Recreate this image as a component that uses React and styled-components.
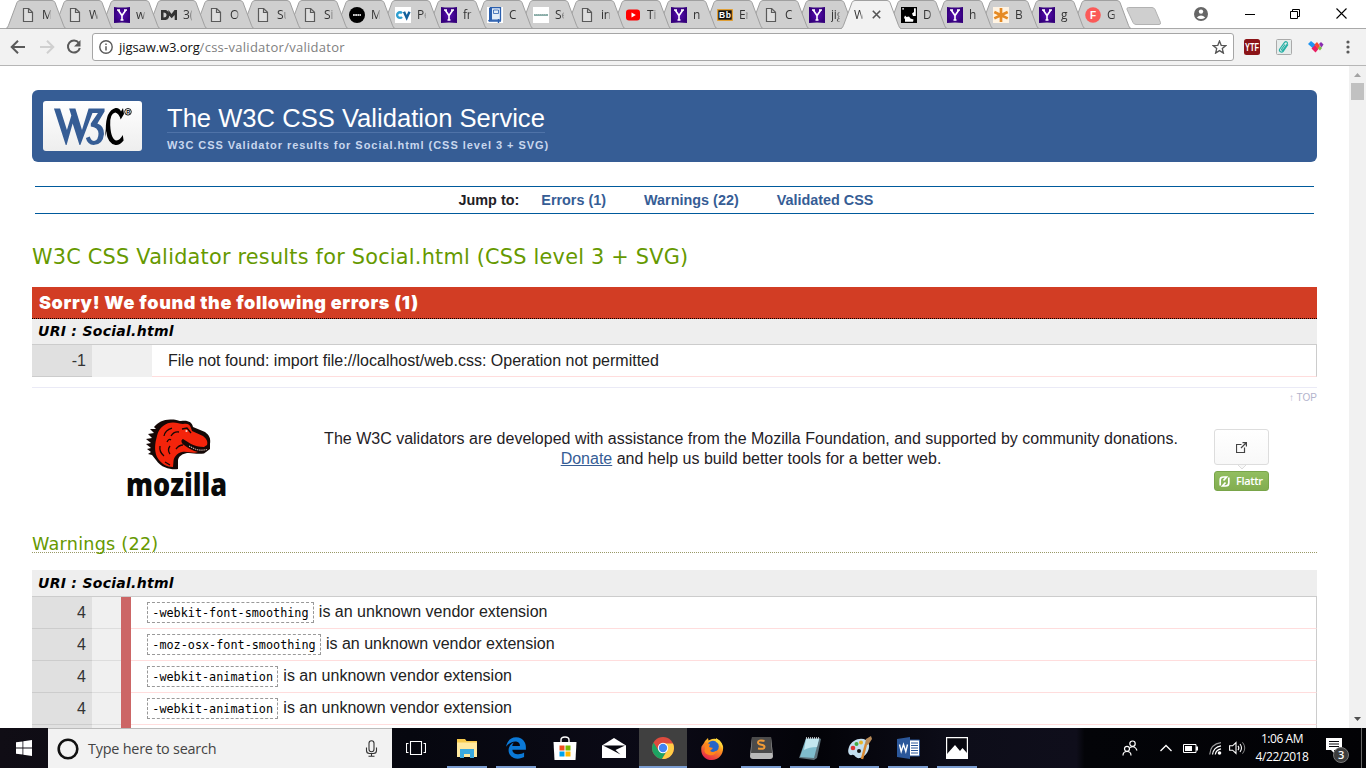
import React from 'react';
import styled, { createGlobalStyle } from 'styled-components';
import { FaEdgeLegacy } from 'react-icons/fa';

const Global = createGlobalStyle`
  * { box-sizing: border-box; }
  body { margin: 0; background: #fff; overflow: hidden; }
  svg { display: block; flex: none; }
`;

const ui = `"Open Sans", "Noto Sans", sans-serif`;
const arial = `"Liberation Sans", Arial, sans-serif`;
const verdana = `"DejaVu Sans", Verdana, sans-serif`;

const Screen = styled.div`
  width: 1366px;
  height: 768px;
  display: flex;
  flex-direction: column;
  overflow: hidden;
  font-family: ${arial};
`;

/* ---------- browser frame ---------- */
const TabStrip = styled.div`
  height: 29px;
  display: flex;
  padding-left: 6px;
  flex: none;
  border-bottom: 1px solid #a9a9a9;
`;
const TabItem = styled.div`
  position: relative;
  width: 59px;
  height: 29px;
  flex: none;
  margin-right: ${p => p.$overlap}px;
  z-index: ${p => p.$z};
  display: flex;
  align-items: center;
  padding: 0 0 0 ${p => (p.$active ? 13 : 14)}px;
`;
const TabShape = styled.svg`
  position: absolute;
  left: 0;
  top: 0;
`;
const Favicon = styled.div`
  position: relative;
  width: 16px;
  height: 16px;
  margin-right: 6px;
  margin-top: 1px;
`;
const TabLabel = styled.span`
  position: relative;
  width: 9px;
  overflow: hidden;
  white-space: nowrap;
  font: 12px/18px ${ui};
  letter-spacing: -0.2px;
  color: #333;
  mask-image: linear-gradient(90deg, #000 65%, rgba(0, 0, 0, 0.2));
`;
const TabClose = styled.svg`
  position: relative;
  margin-left: 9px;
`;
const NewTab = styled.svg`
  margin: 7px 0 0 9px;
`;
const WindowControls = styled.div`
  margin-left: auto;
  display: flex;
  align-items: center;
  height: 27px;
  padding-right: 19px;
`;
const Control = styled.svg`
  margin-left: ${p => p.$gap}px;
`;

const Toolbar = styled.div`
  height: 37px;
  flex: none;
  background: #f2f2f2;
  border-bottom: 1px solid #b6b6b6;
  display: flex;
  align-items: center;
  padding: 0 10px 0 9px;
`;
const NavIcon = styled.svg`
  margin-right: ${p => p.$gap}px;
`;
const Omnibox = styled.div`
  width: 1142px;
  height: 28px;
  background: #fff;
  border: 1px solid #a6a6a6;
  border-radius: 3px;
  display: flex;
  align-items: center;
  padding: 0 6px;
`;
const Address = styled.div`
  flex: 1;
  margin-left: 6px;
  font: 13px/20px ${ui};
  letter-spacing: 0.27px;
  color: #808080;
  b { font-weight: 400; color: #111; letter-spacing: -0.08px; }
`;
const Extensions = styled.div`
  margin-left: 10px;
  display: flex;
  align-items: center;
  gap: 16px;
`;

/* ---------- page ---------- */
const Viewport = styled.div`
  height: 662px;
  flex: none;
  display: flex;
  overflow: hidden;
`;
const Page = styled.main`
  width: 1349px;
  padding: 24px 32px 0;
  overflow: hidden;
`;
const Scrollbar = styled.div`
  width: 17px;
  background: #f1f1f1;
  display: flex;
  flex-direction: column;
  align-items: center;
  justify-content: space-between;
`;
const ScrollTop = styled.div`
  display: flex;
  flex-direction: column;
  align-items: center;
`;
const Thumb = styled.div`
  width: 13px;
  height: 17px;
  background: #c1c1c1;
`;
const Banner = styled.header`
  height: 72px;
  background: #365d95;
  border-radius: 6px;
  display: flex;
  padding: 11px;
`;
const LogoBox = styled.div`
  width: 99px;
  height: 50px;
  border-radius: 3px;
  background: linear-gradient(#fff, #eee);
  margin-right: 25px;
`;
const BannerText = styled.div`
  display: flex;
  flex-direction: column;
  align-items: flex-start;
`;
const BannerTitle = styled.h1`
  margin: 0;
  height: 32px;
  font: 400 25.6px/34px ${arial};
  color: #fff;
  border-bottom: 1px solid #4f73a8;
`;
const BannerSub = styled.p`
  margin: 5px 0 0;
  font: 700 11px/14px ${arial};
  letter-spacing: 0.96px;
  color: #c8d7ee;
  white-space: nowrap;
`;
const JumpBar = styled.nav`
  margin: 24px 3px 0;
  height: 28px;
  border-top: 1px solid #005a9c;
  border-bottom: 1px solid #005a9c;
  display: flex;
  align-items: center;
  justify-content: center;
  font: 700 14.4px/20px ${arial};
  color: #1f2126;
  padding-right: 17px;
`;
const JumpLink = styled.a`
  color: #365d95;
  margin-left: ${p => p.$gap}px;
`;
const ResultTitle = styled.h2`
  margin: 30px 0 0;
  font: 400 20.8px/26px ${verdana};
  letter-spacing: 0.23px;
  color: #690;
  white-space: nowrap;
`;
const ErrorTitle = styled.h3`
  margin: 17px 0 0;
  height: 32px;
  padding-left: 7px;
  background: #d23d24;
  border-bottom: 1px dotted #000;
  color: #fff;
  font: 900 18px/32px Inter, ${arial};
  letter-spacing: 0.62px;
`;
const UriBar = styled.h4`
  margin: 0;
  height: ${p => p.$h}px;
  padding-left: 6px;
  background: #eee;
  border-bottom: 1px solid #ccc;
  font: italic 700 14px/25px ${verdana};
  line-height: ${p => (p.$h === 27 ? 27 : 25)}px;
  letter-spacing: 0.28px;
  color: #000;
`;
const Row = styled.div`
  display: flex;
  height: 32px;
  font: 16px/30px ${arial};
  color: #222;
`;
const LineNo = styled.div`
  width: 60px;
  background: #e0e0e0;
  border-bottom: 1px solid #ccc;
  text-align: right;
  padding-right: 6px;
  font: 16px/32px ${arial};
  color: #333;
`;
const Context = styled.div`
  width: ${p => p.$w}px;
  background: #f0f0f0;
  border-bottom: 1px solid ${p => (p.$line ? '#ddd' : '#f0f0f0')};
`;
const Level = styled.div`
  width: 10px;
  background: #cc6666;
`;
const Message = styled.div`
  flex: 1;
  padding-left: 16px;
  padding-top: ${p => p.$drop || 0}px;
  border-bottom: 1px solid #fdd;
  border-right: 1px solid #ccc;
  color: #222;
`;
const Code = styled.code`
  display: inline-block;
  height: 21px;
  border: 1px dashed #999;
  padding: 0 4.3px;
  margin-right: 5px;
  font: 11.8px/21px "DejaVu Sans Mono", monospace;
  color: #000;
`;
const BackTop = styled.div`
  margin-top: 10px;
  border-top: 1px solid #eaeaf6;
  text-align: right;
  font: 10px/20px ${arial};
  color: #b3b3cc;
`;
const Support = styled.section`
  height: 124px;
  display: flex;
`;
const MozillaMark = styled.div`
  width: 250px;
  padding: 10px 0 0 90px;
`;
const SupportText = styled.p`
  margin: 21px 0 0 0;
  width: 938px;
  text-align: center;
  font: 16px/20px ${arial};
  color: #1f2126;
  a { color: #365d95; text-decoration: underline; }
`;
const Flattr = styled.div`
  width: 55px;
  margin: 21px 0 0 -6px;
`;
const FlattrCount = styled.div`
  height: 36px;
  border: 1px solid #ddd;
  border-radius: 3px;
  background: linear-gradient(#fff, #f8f8f8);
  display: flex;
  align-items: center;
  justify-content: center;
`;
const FlattrButton = styled.div`
  height: 20px;
  border: 1px solid #79a549;
  border-radius: 3px;
  background: linear-gradient(#92be60, #82ad50);
  display: flex;
  align-items: center;
  gap: 6px;
  padding-left: 4px;
  color: #fff;
  font: 600 11px/18px ${ui};
  letter-spacing: -0.35px;
`;
const WarningTitle = styled.h3`
  margin: 0 0 17px;
  height: 21px;
  border-bottom: 1px dotted #996;
  font: 400 17.6px/24px ${verdana};
  letter-spacing: 0.25px;
  color: #690;
`;

/* ---------- taskbar ---------- */
const Taskbar = styled.footer`
  height: 40px;
  flex: none;
  display: flex;
  background: linear-gradient(90deg, #100d15 0, #06070f 30%, #0b0a16 48%, #030308 60%, #0d0d19 70%, #0f0e1b 78.8%, #030408 79.4%, #020205 100%);
  color: #fff;
`;
const Start = styled.div`
  width: 48px;
  display: flex;
  align-items: center;
  justify-content: center;
`;
const Search = styled.div`
  width: 344px;
  background: #f2f2f2;
  border-top: 1px solid #bbb;
  display: flex;
  align-items: center;
  padding: 0 14px 0 8px;
  font: 14.4px/20px ${ui};
  letter-spacing: -0.22px;
  color: #444;
  span { flex: 1; margin-left: 8px; }
`;
const TaskView = styled.div`
  width: 51px;
  display: flex;
  align-items: center;
  justify-content: center;
  padding-right: 3px;
`;
const Apps = styled.div`
  display: flex;
  gap: 1px;
`;
const TaskButton = styled.div`
  width: 48px;
  height: 40px;
  display: flex;
  flex-direction: column;
  align-items: center;
  background: ${p => (p.$active ? '#404040' : 'transparent')};
`;
const AppIcon = styled.div`
  height: 38px;
  display: flex;
  align-items: center;
  padding-top: 2px;
`;
const Underline = styled.div`
  width: ${p => (p.$active ? 48 : 40)}px;
  height: 2px;
  background: ${p => (p.$show ? '#7a9cd0' : 'transparent')};
`;
const Tray = styled.div`
  margin-left: auto;
  display: flex;
  align-items: center;
`;
const TrayIcon = styled.svg`
  margin-right: ${p => p.$gap}px;
`;
const Clock = styled.div`
  width: 60px;
  margin-right: 13px;
  text-align: center;
  font: 12px/18px ${ui};
  letter-spacing: -0.45px;
  white-space: nowrap;
`;
const ShowDesktop = styled.div`
  width: 5px;
  height: 40px;
  border-left: 1px solid #666;
`;

const Fav = ({ kind }) => {
  const s = { width: 16, height: 16, viewBox: '0 0 16 16' };
  switch (kind) {
    case 'y':
      return <svg {...s}><defs><radialGradient id="yg"><stop offset="0" stopColor="#5a10b4" /><stop offset="1" stopColor="#35007c" /></radialGradient></defs><path d="M0 0q8 1.2 16 0v16q-8-1.2-16 0z" fill="url(#yg)" /><path d="M3 3h3M10 3h3M4.3 3.3 8 8.5 11.7 3.3M8 8.5V13M6.5 13h3" stroke="#fff" strokeWidth="1.6" fill="none" /></svg>;
    case 'dm':
      return <svg {...s}><path d="M0 3h5q3 1 3 5t-3 5H0zM2.5 5.5v5q3 0 3-2.5t-3-2.5z" fill="#333" fillRule="evenodd" /><path d="M7.5 3l3 4 3-4H16v10h-2.3V8l-3 3.3-2.4-2.5L6.5 13z" fill="#333" /></svg>;
    case 'black':
      return <svg {...s}><circle cx="8" cy="8" r="8" fill="#000" /><path d="M4 8h8" stroke="#ccc" strokeWidth="1.8" strokeDasharray="1.8 .4" /></svg>;
    case 'cv':
      return <svg {...s}><rect width="16" height="16" fill="#fff" /><path d="M7 6.2A2.8 2.8 0 1 0 7 10" stroke="#2f9fd0" strokeWidth="2.4" fill="none" /><path d="M9 4.800l2.700 6L14.500 4.800" stroke="#14619c" strokeWidth="2.4" fill="none" /></svg>;
    case 'book':
      return <svg {...s}><rect width="16" height="16" fill="#fff" /><path d="M3 .7h10.500v12.500H3q-1.300 0-1.300 1" fill="#e4edf8" stroke="#2b5fae" strokeWidth="1.300" /><path d="M2 .7h3v12.500H2z" fill="#2b5fae" /><path d="M6.500 3h5v3.500h-5z" fill="none" stroke="#2b5fae" strokeWidth=".8" /><path d="M2 14h12M11.500 12v4" stroke="#2b5fae" strokeWidth="1.4" /></svg>;
    case 'line':
      return <svg {...s}><rect width="16" height="16" fill="#fff" /><path d="M1 8h14" stroke="#6d9a94" strokeWidth="1.600" /><path d="M2 7.500h12" stroke="#a9bcb9" strokeWidth="1" strokeDasharray="1 1" /></svg>;
    case 'yt':
      return <svg {...s}><rect x="1" y="2.5" width="14" height="11" rx="3" fill="#f00" /><path d="M6.5 5.5v5L10.8 8z" fill="#fff" /></svg>;
    case 'bb':
      return <svg {...s}><rect x=".7" y="2.7" width="14.6" height="10.6" fill="#111" stroke="#e8a02c" strokeWidth="1.2" /><text x="2" y="11" fontFamily={arial} fontWeight="700" fontSize="8.5" fill="#fff" textLength="12">Bb</text></svg>;
    case 'bw':
      return <svg {...s}><rect width="16" height="16" fill="#fff" /><path d="M1 2.500h2V1h10v4l-2 1.500 1 2.500h3v6h-3l.5-2.500-3-1L8 9.500 5.500 10 4 8.500 3 11l1 1v3H1z" fill="#000" /><path d="M0 0h16v16H0z" fill="none" stroke="#000" strokeWidth="2.400" /></svg>;
    case 'ast':
      return <svg {...s}><rect width="16" height="16" fill="#fff3e2" /><path d="M8 1v14M1.3 5l13.4 6.4M14.7 5 1.3 11.4" stroke="#e58a24" strokeWidth="2.7" /></svg>;
    case 'f':
      return <svg {...s}><circle cx="8" cy="8" r="7.8" fill="#fb5a58" /><text x="5" y="11.6" fontFamily={arial} fontWeight="700" fontSize="10" fill="#fff">F</text></svg>;
    default:
      return <svg {...s}><path d="M3.5 1.5h5.2l3.8 3.8v9.2h-9zM8.5 1.5v4h4" fill="#dedede" stroke="#5a5a5a" strokeWidth="1.2" /></svg>;
  }
};

const tabs = [
  ['doc', 'M'], ['doc', 'W'], ['y', 'w'], ['dm', '3('], ['doc', 'O'], ['doc', 'Su'], ['doc', 'Si'], ['black', 'M'],
  ['cv', 'Pe'], ['y', 'fr'], ['book', 'C'], ['line', 'Se'], ['doc', 'in'], ['yt', 'Ti'], ['y', 'n'], ['bb', 'Er'],
  ['doc', 'C'], ['y', 'jig'], ['active', 'W'], ['bw', 'D'], ['y', 'h'], ['ast', 'B'], ['y', 'g'], ['f', 'G'],
];

const Tab = ({ kind, label, index }) => {
  const active = kind === 'active';
  return (
    <TabItem $overlap={index < 7 ? -12 : -13} $z={active ? 50 : 40 - index} $active={active}>
      <TabShape width="60" height="29" viewBox="0 0 60 29">
        <path d="M0 29C1.5 28 2 26.5 3 24L11 2.5Q12 .5 14 .5H46Q48 .5 49 2.5L57 24C58 26.5 58.5 28 60 29z" fill={active ? '#f2f2f2' : '#cfcfcf'} />
        <path d="M0 28.5C1.5 28 2 26.5 3 24L11 2.5Q12 .5 14 .5H46Q48 .5 49 2.5L57 24C58 26.5 58.5 28 60 28.5" fill="none" stroke="#a0a0a0" />
        {!active && <path d="M0 28.5H60" stroke="#a0a0a0" />}
      </TabShape>
      {!active && <Favicon><Fav kind={kind} /></Favicon>}
      <TabLabel>{label}</TabLabel>
      {active && <TabClose width="9" height="9" viewBox="0 0 9 9"><path d="M.8.8l7.4 7.4M8.2.8.8 8.2" stroke="#555" strokeWidth="1.6" /></TabClose>}
    </TabItem>
  );
};

const W3CLogo = () => (
  <svg width="99" height="50" viewBox="0 0 99 50">
    <path transform="translate(-.6 0) scale(1.1 1)" d="M10.500 7.500h5.600l6.200 21.500 4-14.500-2-7H30l6 21.500 6-21.500h14.500v3L50 22.500q6 2 6 10.500-1 11-9.500 11-5.500-.5-7-7l3.500-1.500q1.500 4.500 4 4.500 4-1 4-7.500-.5-6.500-7-7v-3l6.500-10.500h-5L34.500 44h-.8L27.500 22.500 22 44h-.8z" fill="#365d95" />
    <g transform="translate(4.500 0)">
      <path d="M75.500 7l1 6-3.300 5.500q-2-6.500-5.500-7-5.500 1-5 12.500Q63.500 39 69 39.500q3.500-.5 6.300-5.500l.8 5.500Q72 44.500 68 44q-8-1.500-9.300-14L58 36q-.5-3 .3-8 0-18.500 9.700-21 4-.5 5.500 3.500z" fill="#000" />
      <circle cx="80.500" cy="10.800" r="3.300" fill="none" stroke="#000" strokeWidth=".9" />
      <text x="78.700" y="12.900" fontFamily={arial} fontWeight="700" fontSize="5.500">R</text>
    </g>
  </svg>
);

const Mozilla = () => (
  <svg width="110" height="84" viewBox="122 418 110 84">
    <path d="M154 427c4-5 10-8 18-7.500 5 0 6 1.500 9 1.500 7-1 11 1 12 6l12 5c4 3 6 6 5 12v5l-6 4.500c-8 1-11-1-17-.5-5 1-8 3-9 7l0 9c-5 1-16 0-22-9l-4-5-4-1 3-2-4-3 4-1-5-4 5-1-5-4 6-1-4-4 6-1-4-4 6 0z" fill="#150806" />
    <path d="M157 436c2-9 9-13.500 16-13.500 4 0 7 1.500 10 1.500 4-1 7 0 8 4l1 3 11 5c4 3 5 6 4 9l-3 2c-5 0-9-1-13-3l-8-5c-3 1-1 5 1 6 4 3 9 6 14 7-5 2-10-1-16 0-5 1-8 5-8.500 9l-.5 6c-6 0-12-3-16-10-3-7-2-14 0-21z" fill="#f4240b" />
    <path d="M164 436q1-6 8-8M171 436q3-5 8-4M160 446q-1 6 4 10M170 446q-3 4 0 8M165 462l5 3M182 429l5-1 4 5M167 442q2-4 4-2M176 449q3-4 7-4" fill="none" stroke="#150806" strokeWidth="1.300" />
    <circle cx="186.500" cy="431" r="1.100" fill="#f0d8d0" />
    <path d="M189 446l6 3q5 2 12 .500" fill="none" stroke="#f3d9cf" strokeWidth="1" strokeDasharray="1.400 .8" />
    <text x="126" y="495.500" fontFamily='"Open Sans", sans-serif' fontWeight="800" fontSize="31" textLength="101" lengthAdjust="spacingAndGlyphs" fill="#0a0a0a">mozilla</text>
  </svg>
);

const appIcons = {
  explorer: <svg width="22" height="20" viewBox="0 0 22 20"><path d="M1 1h8l1.500 2H21v16H1z" fill="#f6c94c" /><path d="M1 4.500h20V19H1z" fill="#ffe9a0" /><path d="M4 11h14v9h-4v-4H8v4H4z" fill="#3aa9de" /></svg>,
  edge: <FaEdgeLegacy size={22} color="#0b79d7" />,
  store: <svg width="24" height="24" viewBox="0 0 24 24"><path d="M.5 6h23l-1 18h-21z" fill="#fff" /><path d="M8 9V4q0-3 4-3t4 3v5" stroke="#fff" strokeWidth="1.400" fill="none" /><path d="M6.500 9.500h5v5h-5z" fill="#f04e1f" /><path d="M12.500 9.500h5v5h-5z" fill="#7bb800" /><path d="M6.500 15.500h5v5h-5z" fill="#00a3ee" /><path d="M12.500 15.500h5v5h-5z" fill="#ffb800" /></svg>,
  mail: <svg width="24" height="20" viewBox="0 0 24 20"><path d="M0 7.500 12 0l12 7.500V20H0z" fill="#fff" /><path d="M1 7.500h22L13.500 12l5 4.500L9 11.500z" fill="#07070f" /></svg>,
  chrome: <svg width="22" height="22" viewBox="0 0 22 22"><circle cx="11" cy="11" r="11" fill="#dd4b3e" /><path d="M1.500 5.500A11 11 0 0 0 10 22l5.300-9L11 11 6.500 13.500z" fill="#1da362" /><path d="M10 22A11 11 0 0 0 21 6.500H11l4.500 6.500z" fill="#ffcd46" /><circle cx="11" cy="11" r="5.200" fill="#fff" /><circle cx="11" cy="11" r="4.200" fill="#4285f4" /></svg>,
  firefox: <svg width="23" height="23" viewBox="0 0 23 23"><defs><linearGradient id="fx" x1=".8" x2=".3" y2="1"><stop offset="0" stopColor="#fff04a" /><stop offset=".4" stopColor="#ff9a1e" /><stop offset="1" stopColor="#e5214d" /></linearGradient></defs><path d="M4 4l3-3 .5 2.500L11 2q8-2 11 7c1 8-4 14-11 14S-1 18 .5 9.500L3 6z" fill="url(#fx)" /><circle cx="12" cy="9.500" r="5.800" fill="#2665c8" /><path d="M4 6l5 1-1 3 4 1-3 3q3 2 7-.5-2 6-8 4.500T4 11z" fill="#ff861c" /><path d="M15 1q7 4 6.500 12Q20 6 15 5z" fill="#ffd93b" /></svg>,
  sublime: <svg width="23" height="22" viewBox="0 0 23 22"><path d="M2 0h19l2 19q0 3-3 3H3q-3 0-3-3z" fill="#b9b9b9" /><path d="M2 0h19l1 16H1z" fill="#4b4b4b" /><path d="M14.500 4q-6.500-1.500-6.500 1.500 0 1.600 3.300 2.200T14.500 10q0 2.700-6.500 1.500" stroke="#f29b36" strokeWidth="2" fill="none" /></svg>,
  notepad: <svg width="24" height="23" viewBox="0 0 24 23"><path d="M8 1h13l2 1-4 19-3 2-15-2z" fill="#5b6f78" /><path d="M8 2h13l-5 19-14-1z" fill="#7fbccc" /><path d="M8 2h13l-2 8q-8 0-13 3z" fill="#c3e6ee" /><path d="M8 1h13" stroke="#dfe5e8" strokeWidth="1.500" strokeDasharray="1 1" /></svg>,
  paint: <svg width="25" height="24" viewBox="0 0 25 24"><path d="M2 11C5 4 13 1 19 4s3 16-6 18c-5 1-5-4-8-3s-5-3-3-8z" fill="#c3dff0" /><circle cx="6" cy="12" r="2.300" fill="#d33" /><circle cx="9.500" cy="8" r="2" fill="#4a4" /><circle cx="14" cy="6.500" r="2" fill="#e6b32b" /><circle cx="12" cy="15" r="2" fill="#111" /><path d="M15 23l4-15" stroke="#d98a33" strokeWidth="2.500" /><path d="M18 8l1-5 5-3 1 3-4 6z" fill="#b98b58" /></svg>,
  word: <svg width="23" height="22" viewBox="0 0 23 22"><path d="M12 3h10.500v16H12z" fill="#fff" stroke="#2b579a" /><path d="M14 6h7M14 8.500h7M14 11h7M14 13.500h7M14 16h7" stroke="#2b579a" /><path d="M0 2l13-2v22L0 20z" fill="#2b579a" /><path d="M2.500 7.500l1.700 7 2.300-7 2.300 7 1.700-7" stroke="#fff" strokeWidth="1.400" fill="none" /></svg>,
  photos: <svg width="22" height="22" viewBox="0 0 22 22"><path d="M.6.600h20.800v20.800H.6z" fill="#080810" stroke="#fff" strokeWidth="1.200" /><path d="M1 17l8-9 5 6 2.500-3L21 16v5H1z" fill="#fff" /></svg>,
};
const apps = [
  ['explorer', true], ['edge', true], ['store', false], ['mail', false], ['chrome', true, true], ['firefox', false],
  ['sublime', true], ['notepad', true], ['paint', true], ['word', true], ['photos', true],
];

const warnings = ['-webkit-font-smoothing', '-moz-osx-font-smoothing', '-webkit-animation', '-webkit-animation'];

export default function App() {
  return (
    <>
      <Global />
      <Screen>
        <TabStrip>
          {tabs.map(([kind, label], i) => <Tab key={i} kind={kind} label={label} index={i} />)}
          <NewTab width="36" height="18" viewBox="0 0 36 18"><path d="M2.500.5H26Q28 .5 29 2.500L34.500 15.500Q35 17.500 33 17.500H10Q8 17.500 7 15.500L1 2.500Q.5.500 2.500.500z" fill="#cfcfcf" stroke="#b2b2b2" /></NewTab>
          <WindowControls>
            <Control width="14" height="14" viewBox="0 0 14 14"><circle cx="7" cy="7" r="7" fill="#666" /><circle cx="7" cy="4.600" r="2.200" fill="#fff" /><path d="M2.800 10.500Q7 6.300 11.200 10.500 7 13.500 2.800 10.500z" fill="#fff" /></Control>
            <Control $gap={37} width="10" height="10" viewBox="0 0 10 10"><path d="M0 5.500h10" stroke="#000" /></Control>
            <Control $gap={35} width="10" height="10" viewBox="0 0 10 10"><path d="M.5 2.500h7v7h-7zM2.500 2V.500h7v7H8" stroke="#000" fill="none" /></Control>
            <Control $gap={36} width="11" height="11" viewBox="0 0 11 11"><path d="M.5.500l10 10M10.500.500l-10 10" stroke="#000" strokeWidth="1.100" /></Control>
          </WindowControls>
        </TabStrip>
        <Toolbar>
          <NavIcon $gap={13} width="18" height="16" viewBox="0 0 18 16"><path d="M16 8H3M9 1.700 2.700 8 9 14.300" stroke="#5a5a5a" strokeWidth="2" fill="none" /></NavIcon>
          <NavIcon $gap={10} width="16" height="16" viewBox="0 0 16 16"><path d="M0 8h12.500M7 1.700 13.300 8 7 14.300" stroke="#d0d0d0" strokeWidth="2" fill="none" /></NavIcon>
          <NavIcon $gap={10} width="16" height="16" viewBox="0 0 16 16"><path d="M12.800 4A6 6 0 1 0 13.800 9" stroke="#5a5a5a" strokeWidth="2" fill="none" /><path d="M14.500 1v6.500H8z" fill="#5a5a5a" /></NavIcon>
          <Omnibox>
            <svg width="14" height="14" viewBox="0 0 14 14"><circle cx="7" cy="7" r="6.200" fill="none" stroke="#5a5a5a" strokeWidth="1.400" /><path d="M7 6.200v4.300M7 3.400v1.600" stroke="#5a5a5a" strokeWidth="1.500" /></svg>
            <Address><b>jigsaw.w3.org</b>/css-validator/validator</Address>
            <svg width="15" height="14" viewBox="0 0 15 14"><path d="M7.500 1l1.700 4.300 4.600.3-3.500 3 1.100 4.500-3.900-2.500-3.900 2.500 1.100-4.500-3.500-3 4.600-.3z" fill="none" stroke="#555" strokeWidth="1.300" /></svg>
          </Omnibox>
          <Extensions>
            <svg width="16" height="16" viewBox="0 0 16 16"><rect width="16" height="16" rx="2.500" fill="#8b1418" /><text x="1" y="12" fontFamily={arial} fontWeight="700" fontSize="10" fill="#fff" textLength="14" lengthAdjust="spacingAndGlyphs">YTF</text></svg>
            <svg width="16" height="16" viewBox="0 0 16 16"><rect x=".5" y=".5" width="15" height="15" rx="1" fill="#e6eceb" stroke="#aaa" /><path d="M12 5.500 7.500 12c-2 2.300-5 .3-3.700-2L8.500 3.500c1.500-1.700 3.700-.3 2.700 1.500L7 11c-1 .8-1.800 0-1.200-1L9 5.500" fill="none" stroke="#25b0a5" strokeWidth="1.200" /></svg>
            <svg width="16" height="16" viewBox="0 0 16 16"><path d="M0 5l3-3 5 4-3 3.500z" fill="#1f94f2" /><path d="M3.500 9.500 7 6l3.500 4-3 3.500z" fill="#e91e63" /><path d="M6.500 5.500 9 3l3 4-2 3z" fill="#f8492f" /><path d="M10 9.500l2-2.500 2 2-2 2.500z" fill="#7ac143" /><path d="M11 5l2-2 2.500 2.500-2 3z" fill="#8a2bb0" /></svg>
            <svg width="16" height="16" viewBox="0 0 16 16"><g fill="#5a5a5a"><circle cx="8" cy="3" r="1.600" /><circle cx="8" cy="8" r="1.600" /><circle cx="8" cy="13" r="1.600" /></g></svg>
          </Extensions>
        </Toolbar>

        <Viewport>
          <Page>
            <Banner>
              <LogoBox><W3CLogo /></LogoBox>
              <BannerText>
                <BannerTitle>The W3C CSS Validation Service</BannerTitle>
                <BannerSub>W3C CSS Validator results for Social.html (CSS level 3 + SVG)</BannerSub>
              </BannerText>
            </Banner>
            <JumpBar>
              <span>Jump to:</span>
              <JumpLink $gap={22}>Errors (1)</JumpLink>
              <JumpLink $gap={38}>Warnings (22)</JumpLink>
              <JumpLink $gap={38}>Validated CSS</JumpLink>
            </JumpBar>
            <ResultTitle>W3C CSS Validator results for Social.html (CSS level 3 + SVG)</ResultTitle>
            <ErrorTitle>Sorry! We found the following errors (1)</ErrorTitle>
            <UriBar $h={26}>URI : Social.html</UriBar>
            <Row>
              <LineNo>-1</LineNo>
              <Context $w={60} />
              <Message $drop={1}>File not found: import file://localhost/web.css: Operation not permitted</Message>
            </Row>
            <BackTop>↑ TOP</BackTop>
            <Support>
              <MozillaMark><Mozilla /></MozillaMark>
              <SupportText>
                The W3C validators are developed with assistance from the Mozilla Foundation, and supported by community donations.<br />
                <a>Donate</a> and help us build better tools for a better web.
              </SupportText>
              <Flattr>
                <FlattrCount><svg width="11" height="11" viewBox="0 0 11 11"><path d="M5.500 2.500h-5v8h8v-5M5 6l5-5M6.500.600H10.400V4.500" stroke="#444" fill="none" strokeWidth="1.200" /></svg></FlattrCount>
                <svg width="55" height="6" viewBox="0 0 55 6"><path d="M23-1 28 4 33-1" fill="#f8f8f8" stroke="#ddd" /></svg>
                <FlattrButton>
                  <svg width="11" height="11" viewBox="0 0 11 11"><path d="M1.200 9.500V4Q1.200 1 4.500 1h3L4.500 4.500M9.800 1.500V7q0 3-3.300 3h-3l3-3.500" stroke="#fff" strokeWidth="1.700" fill="none" /></svg>
                  Flattr
                </FlattrButton>
              </Flattr>
            </Support>
            <WarningTitle>Warnings (22)</WarningTitle>
            <UriBar $h={27}>URI : Social.html</UriBar>
            {warnings.map((w, i) => (
              <Row key={i}>
                <LineNo>4</LineNo>
                <Context $w={29} $line />
                <Level />
                <Message><Code>{w}</Code>is an unknown vendor extension</Message>
              </Row>
            ))}
            <Row>
              <LineNo />
              <Context $w={29} $line />
              <Level />
              <Message />
            </Row>
          </Page>
          <Scrollbar>
            <ScrollTop>
              <svg width="17" height="17" viewBox="0 0 17 17"><path d="M5 11l3.500-4L12 11z" fill="#a3a3a3" /></svg>
              <Thumb />
            </ScrollTop>
            <svg width="17" height="17" viewBox="0 0 17 17"><path d="M5 6l3.500 4L12 6z" fill="#505050" /></svg>
          </Scrollbar>
        </Viewport>

        <Taskbar>
          <Start><svg width="16" height="16" viewBox="0 0 16 16"><path d="M0 2.300 6.500 1.400v6.100H0zM7.300 1.300 16 0v7.500H7.300zM0 8.400h6.500v6.200L0 13.700zM7.300 8.400H16V16l-8.700-1.300z" fill="#fff" /></svg></Start>
          <Search>
            <svg width="24" height="24" viewBox="0 0 24 24"><circle cx="12" cy="12" r="9.300" fill="none" stroke="#111" strokeWidth="2.600" /></svg>
            <span>Type here to search</span>
            <svg width="13" height="17" viewBox="0 0 13 17"><path d="M6.500.700q2.500 0 2.500 2.500v6q0 2.500-2.500 2.500T4 9.200v-6Q4 .7 6.500.700zM1.500 7.500v3q0 3 3 3h4q3 0 3-3v-3M6.500 13.500V16M3.500 16.300h6" fill="none" stroke="#333" strokeWidth="1.100" /></svg>
          </Search>
          <TaskView><svg width="20" height="14" viewBox="0 0 20 14"><path d="M4.500.500h11v13h-11zM2.500 2.500h-2v9h2M17.500 2.500h2v9h-2" fill="none" stroke="#fff" strokeWidth="1.100" /></svg></TaskView>
          <Apps>
            {apps.map(([name, open, active]) => (
              <TaskButton key={name} $active={active}>
                <AppIcon>{appIcons[name]}</AppIcon>
                <Underline $show={open} $active={active} />
              </TaskButton>
            ))}
          </Apps>
          <Tray>
            <TrayIcon $gap={22} width="16" height="16" viewBox="0 0 16 16"><g fill="none" stroke="#fff" strokeWidth="1.200"><circle cx="10.500" cy="3.700" r="2.700" /><circle cx="5" cy="8.800" r="2.500" /><path d="M1 15.500q0-4 4-4t4 4M8 7.500q5-2.500 7 3" /></g></TrayIcon>
            <TrayIcon $gap={11} width="12" height="8" viewBox="0 0 12 8"><path d="M.5 7 6 1.500 11.500 7" fill="none" stroke="#fff" strokeWidth="1.300" /></TrayIcon>
            <TrayIcon $gap={11} width="15" height="9" viewBox="0 0 15 9"><path d="M.5.500h12.500v8H.500z" fill="none" stroke="#fff" /><path d="M2 2h7v5H2zM13 2.500h2v4h-2z" fill="#fff" /></TrayIcon>
            <TrayIcon $gap={7} width="13" height="13" viewBox="0 0 13 13"><g fill="none" stroke="#fff" strokeWidth="1.200"><path d="M.7 12.500Q1.500 2 12 .700" opacity=".6" /><path d="M3.500 12.500Q4.500 5 12 3.800M6.300 12.500Q7 8 12 6.900" /></g><circle cx="10.500" cy="11" r="1.800" fill="#fff" /></TrayIcon>
            <TrayIcon $gap={6} width="17" height="14" viewBox="0 0 17 14"><path d="M.6 4.800h3L7 1.500v11L3.600 9.200h-3zM9 4.800q1.700 2.200 0 4.400M11 3q3 4 0 8" fill="none" stroke="#fff" strokeWidth="1.100" /><path d="M13.500 1.300q4.500 5.700 0 11.400" fill="none" stroke="#888" /></TrayIcon>
            <Clock>1:06 AM<br />4/22/2018</Clock>
            <TrayIcon $gap={10} width="26" height="30" viewBox="0 0 26 30"><path d="M1 5h16v12H9v3l-3-3H1z" fill="#fff" /><path d="M4 8.500h10M4 11h10M4 13.500h10" stroke="#08080c" /><circle cx="16" cy="22" r="7.500" fill="#3c3c3c" stroke="#777" /><text x="13" y="26" fontFamily={ui} fontSize="11" fontWeight="600" fill="#fff">3</text></TrayIcon>
            <ShowDesktop />
          </Tray>
        </Taskbar>
      </Screen>
    </>
  );
}
